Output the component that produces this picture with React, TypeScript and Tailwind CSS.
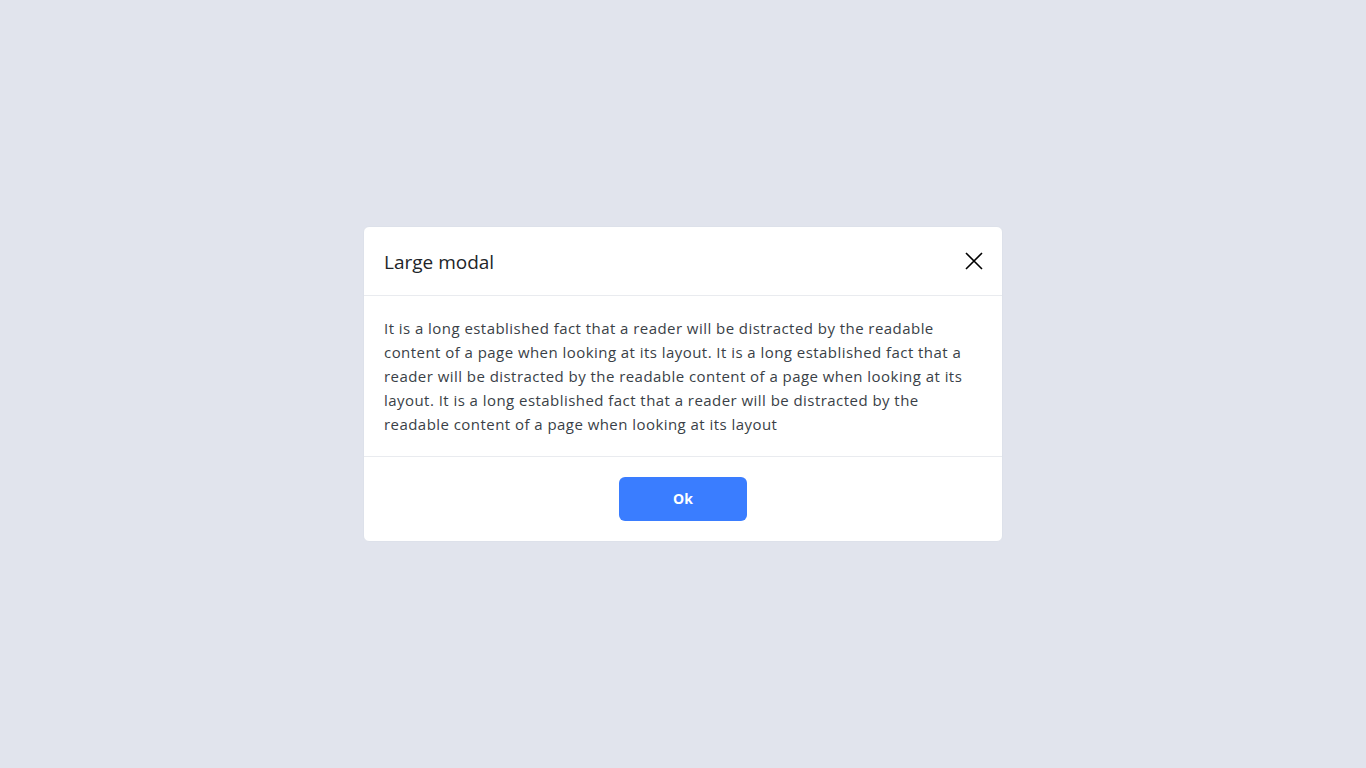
import React from "react";

const text =
  "It is a long established fact that a reader will be distracted by the readable content of a page when looking at its layout. It is a long established fact that a reader will be distracted by the readable content of a page when looking at its layout. It is a long established fact that a reader will be distracted by the readable content of a page when looking at its layout";

const App: React.FC = () => {
  return (
    <div
      className="w-full h-screen bg-[#e1e4ed] flex items-center justify-center"
      style={{ fontFamily: '"Open Sans", sans-serif' }}
    >
      <div className="w-[640px] -mt-[1px] bg-white rounded-md border border-[#dde1ea]">
        <div className="flex items-center justify-between h-[69px] px-5 border-b border-[#e9ebef]">
          <h5 className="text-[19px] text-[#212529] pt-[3px]">Large modal</h5>
          <button type="button" className="text-black mr-[-2px]">
            <svg width="20" height="20" viewBox="0 0 20 20" fill="none" stroke="currentColor" strokeWidth="1.6">
              <path d="M2 2L18 18M18 2L2 18" />
            </svg>
          </button>
        </div>
        <div className="px-5 pt-[20px] pb-[20px] border-b border-[#e9ebef]">
          <p className="text-[15px] leading-6 tracking-[0.45px] text-[#3a3f47]">{text}</p>
        </div>
        <div className="flex justify-center py-5">
          <button
            type="button"
            className="w-[128px] h-[44px] rounded-md bg-[#3a7dff] text-white text-[14px] font-bold"
          >
            Ok
          </button>
        </div>
      </div>
    </div>
  );
};

export default App;
